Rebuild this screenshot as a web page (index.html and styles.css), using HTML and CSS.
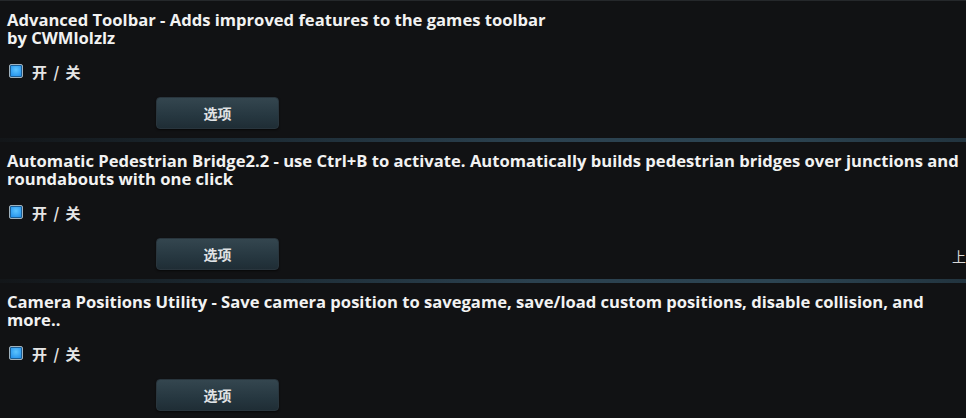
FILE: index.html
```html
<!DOCTYPE html>
<html lang="zh">
<head>
<meta charset="utf-8">
<link rel="stylesheet" href="styles.css">
</head>
<body>
<div class="list">
  <div class="mod">
    <div class="title">Advanced Toolbar - Adds improved features to the games toolbar<br>by CWMlolzlz</div>
    <label class="toggle"><span class="box"></span><span class="tl">开 / 关</span></label>
    <div class="btnrow"><button class="opt">选项</button></div>
  </div>
  <div class="sep"></div>
  <div class="mod">
    <div class="title">Automatic Pedestrian Bridge2.2 - use Ctrl+B to activate. Automatically builds pedestrian bridges over junctions and roundabouts with one click</div>
    <label class="toggle"><span class="box"></span><span class="tl">开 / 关</span></label>
    <div class="btnrow"><button class="opt">选项</button></div>
    <span class="edge">上</span>
  </div>
  <div class="sep"></div>
  <div class="mod">
    <div class="title">Camera Positions Utility - Save camera position to savegame, save/load custom positions, disable collision, and more..</div>
    <label class="toggle"><span class="box"></span><span class="tl">开 / 关</span></label>
    <div class="btnrow"><button class="opt">选项</button></div>
  </div>
</div>
</body>
</html>
```
FILE: styles.css
```css
html, body {
  margin: 0;
  padding: 0;
  background: #111214;
  overflow: hidden;
}
.list {
  width: 966px;
  border-top: 1px solid #25282b;
}
.mod {
  position: relative;
  height: 137px;
  box-sizing: border-box;
  padding: 10px 7px 0 7px;
  display: flex;
  flex-direction: column;
}
.title {
  font-family: "Open Sans", "Noto Sans", sans-serif;
  font-weight: 700;
  font-size: 16.6px;
  line-height: 18px;
  color: #f2f2f2;
  width: 952px;
  min-height: 36px;
}
.toggle {
  display: flex;
  align-items: center;
  gap: 9px;
  margin-top: 16px;
  padding-left: 2px;
  height: 16px;
}
.box {
  width: 12px;
  height: 12px;
  border: 1px solid #9fb1bd;
  border-radius: 2px;
  background: radial-gradient(circle at 50% 40%, #5cc4ff 0%, #2a97ee 70%, #1f7fd0 100%);
  box-shadow: inset 0 0 0 1px #1a5e96;
}
.tl {
  font-family: "Noto Sans CJK SC", sans-serif;
  font-weight: 700;
  font-size: 15px;
  word-spacing: 3px;
  color: #e6e6e6;
}
.btnrow {
  margin-top: 18px;
  padding-left: 149px;
}
.opt {
  width: 123px;
  height: 32px;
  border: 1px solid #29353d;
  border-radius: 4px;
  background: linear-gradient(#34464f, #263740 60%, #1f2d35);
  color: #e0e3e5;
  font-family: "Noto Sans CJK SC", sans-serif;
  font-weight: 700;
  font-size: 14px;
  padding: 0;
  box-shadow: 0 1px 2px rgba(0,0,0,0.6);
}
.edge {
  position: absolute;
  right: 0;
  top: 104px;
  font-family: "Noto Sans CJK SC", sans-serif;
  font-size: 14px;
  color: #d8d8d8;
}
.sep {
  height: 4px;
  background: linear-gradient(90deg, #131619 0%, #1c2a33 25%, #2b414f 55%, #2c4452 80%, #22343f 100%);
}
```
